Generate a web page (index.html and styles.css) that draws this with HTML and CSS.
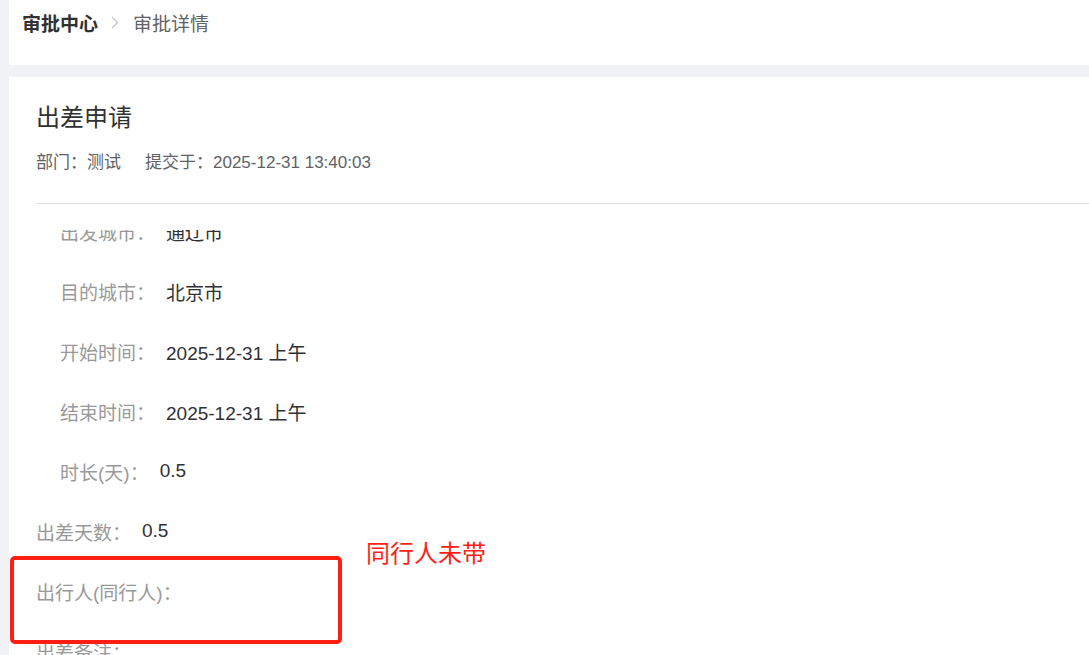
FILE: index.html
```html
<!DOCTYPE html>
<html lang="zh-CN">
<head>
<meta charset="utf-8">
<title>审批详情</title>
<link rel="stylesheet" href="styles.css">
</head>
<body>
<div class="page">
  <header class="topbar">
    <nav class="crumbs">
      <span class="crumb-root">审批中心</span>
      <svg class="crumb-sep" width="8" height="13" viewBox="0 0 8 13"><path d="M1 1 L6.5 6.5 L1 12" fill="none" stroke="#c0c4cc" stroke-width="1.3"/></svg>
      <span class="crumb-cur">审批详情</span>
    </nav>
  </header>
  <main class="card">
    <h1 class="title">出差申请</h1>
    <div class="meta">
      <span>部门：测试</span>
      <span>提交于：2025-12-31 13:40:03</span>
    </div>
    <div class="divider"></div>
    <div class="viewport">
      <div class="rows">
        <div class="row sub"><span class="label">出发城市：</span><span class="value">通辽市</span></div>
        <div class="row sub"><span class="label">目的城市：</span><span class="value">北京市</span></div>
        <div class="row sub"><span class="label">开始时间：</span><span class="value">2025-12-31 上午</span></div>
        <div class="row sub"><span class="label">结束时间：</span><span class="value">2025-12-31 上午</span></div>
        <div class="row sub"><span class="label">时长(天)：</span><span class="value">0.5</span></div>
        <div class="row"><span class="label">出差天数：</span><span class="value">0.5</span></div>
        <div class="row"><span class="label">出行人(同行人)：</span><span class="value"></span></div>
        <div class="row"><span class="label">出差备注：</span><span class="value"></span></div>
      </div>
    </div>
  </main>
  <div class="mark-box"></div>
  <div class="mark-note">同行人未带</div>
</div>
</body>
</html>
```

FILE: styles.css
```css
* { box-sizing: border-box; }
html, body {
  margin: 0;
  padding: 0;
  height: 100%;
  overflow: hidden;
}
body {
  background: #f0f2f5;
  font-family: "Liberation Sans", "Noto Sans CJK SC", sans-serif;
  color: #333;
}
.page {
  position: relative;
  height: 655px;
  padding-left: 9px;
  display: flex;
  flex-direction: column;
  gap: 12px;
}
.topbar {
  background: #fff;
  height: 65px;
  flex: none;
  padding-left: 13px;
}
.crumbs {
  display: flex;
  align-items: center;
  height: 44px;
  font-size: 19px;
}
.crumb-root {
  font-weight: bold;
  color: #303133;
}
.crumb-sep {
  margin: 0 14px 0 13px;
}
.crumb-cur {
  color: #606266;
}
.card {
  background: #fff;
  flex: 1;
  padding: 24px 0 0 27px;
  display: flex;
  flex-direction: column;
  min-height: 0;
}
.title {
  margin: 0;
  font-size: 24px;
  line-height: 34px;
  font-weight: normal;
  color: #303133;
}
.meta {
  margin-top: 16px;
  display: flex;
  gap: 24px;
  font-size: 17px;
  line-height: 24px;
  color: #606266;
}
.divider {
  margin-top: 28px;
  height: 1px;
  background: #dcdfe6;
  flex: none;
}
.viewport {
  margin-top: 26px;
  flex: 1;
  overflow: hidden;
  min-height: 0;
}
.rows {
  margin-top: -29px;
  display: flex;
  flex-direction: column;
}
.row {
  height: 60px;
  flex: none;
  display: flex;
  align-items: center;
  font-size: 19px;
}
.row.sub {
  padding-left: 24px;
}
.label {
  color: #999;
}
.value {
  margin-left: 11px;
  color: #303133;
}
.mark-box {
  position: absolute;
  left: 10px;
  top: 556px;
  width: 332px;
  height: 88px;
  border: 4px solid #ff1e14;
  border-radius: 5px;
}
.mark-note {
  position: absolute;
  left: 366px;
  top: 538px;
  font-size: 24px;
  line-height: 32px;
  color: #ff1e14;
}
```
